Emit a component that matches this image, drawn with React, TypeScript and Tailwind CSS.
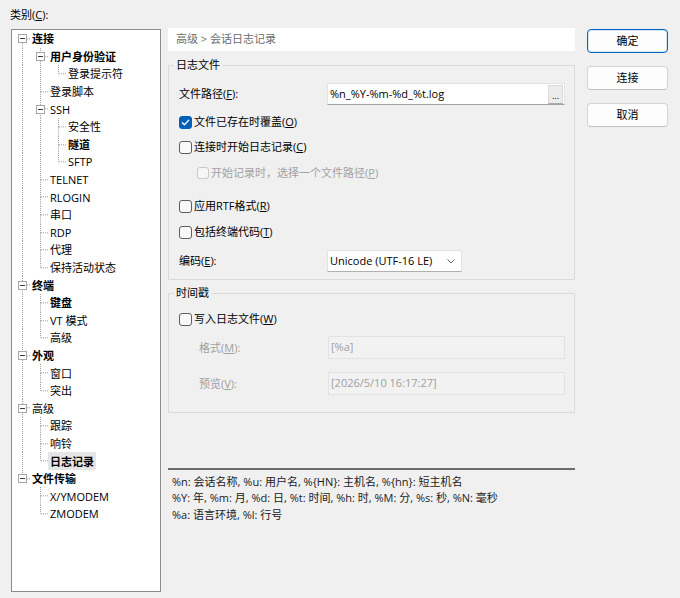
import React from "react";

interface TreeNode {
  label: string;
  level: number;
  bold?: boolean;
  expander?: boolean;
  selected?: boolean;
}

const TREE: TreeNode[] = [
  { label: "连接", level: 0, bold: true, expander: true },
  { label: "用户身份验证", level: 1, bold: true, expander: true },
  { label: "登录提示符", level: 2 },
  { label: "登录脚本", level: 1 },
  { label: "SSH", level: 1, expander: true },
  { label: "安全性", level: 2 },
  { label: "隧道", level: 2, bold: true },
  { label: "SFTP", level: 2 },
  { label: "TELNET", level: 1 },
  { label: "RLOGIN", level: 1 },
  { label: "串口", level: 1 },
  { label: "RDP", level: 1 },
  { label: "代理", level: 1 },
  { label: "保持活动状态", level: 1 },
  { label: "终端", level: 0, bold: true, expander: true },
  { label: "键盘", level: 1, bold: true },
  { label: "VT 模式", level: 1 },
  { label: "高级", level: 1 },
  { label: "外观", level: 0, bold: true, expander: true },
  { label: "窗口", level: 1 },
  { label: "突出", level: 1 },
  { label: "高级", level: 0, expander: true },
  { label: "跟踪", level: 1 },
  { label: "响铃", level: 1 },
  { label: "日志记录", level: 1, bold: true, selected: true },
  { label: "文件传输", level: 0, bold: true, expander: true },
  { label: "X/YMODEM", level: 1 },
  { label: "ZMODEM", level: 1 },
];

// work out which dotted guide lines each row needs
function buildRows(nodes: TreeNode[]) {
  const cont: boolean[] = [];
  return nodes.map((n, i) => {
    let hasNext = false;
    for (let j = i + 1; j < nodes.length; j++) {
      if (nodes[j].level < n.level) break;
      if (nodes[j].level === n.level) {
        hasNext = true;
        break;
      }
    }
    const guides = cont.slice(0, n.level);
    cont[n.level] = hasNext;
    cont.length = n.level + 1;
    return { ...n, hasNext, guides, first: i === 0 };
  });
}

const ROWS = buildRows(TREE);

function GuideCell({
  pass,
  top,
  bottom,
  elbow,
  expander,
}: {
  pass?: boolean;
  top?: boolean;
  bottom?: boolean;
  elbow?: boolean;
  expander?: boolean;
}) {
  return (
    <div className="relative h-full w-[18px] shrink-0">
      <svg className="absolute inset-0 h-full w-full" fill="none">
        <g stroke="#a0a0a0" strokeWidth="1" strokeDasharray="1 1">
          {pass && <line x1="9.5" y1="0" x2="9.5" y2="100%" />}
          {top && <line x1="9.5" y1="0" x2="9.5" y2="50%" />}
          {bottom && <line x1="9.5" y1="50%" x2="9.5" y2="100%" />}
          {elbow && <line x1="10" y1="50%" x2="18" y2="50%" />}
        </g>
      </svg>
      {expander && (
        <div className="absolute inset-0 flex items-center justify-center">
          <div className="ml-px flex h-[9px] w-[9px] items-center justify-center border border-[#a6a6a6] bg-white">
            <div className="h-px w-[5px] bg-[#3c3c3c]" />
          </div>
        </div>
      )}
    </div>
  );
}

function Check({
  checked,
  disabled,
  children,
}: {
  checked?: boolean;
  disabled?: boolean;
  children: React.ReactNode;
}) {
  return (
    <div className="flex h-[16px] items-center">
      <span
        className={
          checked
            ? "flex h-[13px] w-[13px] items-center justify-center rounded-[3px] border border-[#005fb8] bg-[#005fb8]"
            : disabled
              ? "h-[12px] w-[12px] rounded-[3px] border border-[#c9c9c9] bg-[#f6f6f6]"
              : "h-[13px] w-[13px] rounded-[3px] border border-[#5e5e5e] bg-[#f9f9f9]"
        }
      >
        {checked && (
          <svg width="11" height="11" viewBox="0 0 11 11" fill="none">
            <path d="M2.3 5.8 L4.4 7.8 L8.7 3.3" stroke="white" strokeWidth="1.3" strokeLinecap="round" strokeLinejoin="round" />
          </svg>
        )}
      </span>
      <span className={disabled ? "ml-[2px] text-[#a2a2a2]" : "ml-[2px]"}>{children}</span>
    </div>
  );
}

function Button({ children, primary }: { children: React.ReactNode; primary?: boolean }) {
  return (
    <div
      className={
        primary
          ? "flex h-[24px] items-center justify-center rounded-[4px] border border-[#0067c0] bg-[#fdfdfd] shadow-[inset_0_0_0_1px_#d6e6f5]"
          : "flex h-[24px] items-center justify-center rounded-[4px] border border-[#d4d4d4] border-b-[#c2c2c2] bg-[#fdfdfd]"
      }
    >
      {children}
    </div>
  );
}

export default function App() {
  return (
    <div className="flex h-[598px] w-[680px] bg-[#f0f0f0] text-[11px] text-black [font-family:'Open_Sans','Noto_Sans_CJK_SC',sans-serif]">
      {/* Category tree */}
      <div className="ml-[11px] flex w-[150px] flex-col">
        <div className="-ml-px mt-[7px] h-[16px] leading-[16px]">
          类别(<u>C</u>):
        </div>
        <div className="mt-[6px] h-[563px] border border-[#8c8c8c] bg-white pl-px">
          {ROWS.map((r, i) => (
            <div key={i} className="flex h-[17.6px] items-center">
              {r.guides.map((g, k) => (
                <GuideCell key={k} pass={g} />
              ))}
              <GuideCell
                top={!(r.level === 0 && r.first)}
                bottom={r.hasNext}
                elbow
                expander={r.expander}
              />
              <span
                className={
                  (r.bold ? "font-bold " : "") +
                  (r.selected
                    ? "-ml-px flex h-full items-center bg-[#e5e5e5] px-[2px] leading-none"
                    : "ml-px leading-none")
                }
              >
                {r.label}
              </span>
            </div>
          ))}
        </div>
      </div>

      {/* Settings panel */}
      <div className="ml-[7px] mt-[28px] flex w-[407px] flex-col">
        <div className="flex h-[23px] items-center bg-white pl-[8px] text-[#6d6d6d]">高级 &gt; 会话日志记录</div>

        <div className="relative mt-[14px] h-[215px] border border-[#dadada] pl-[10px] pt-[17px]">
          <span className="absolute -top-[9px] left-[5px] bg-[#f0f0f0] px-[2px] leading-[16px]">日志文件</span>
          <div className="flex h-[22px] items-center">
            <div className="w-[148px]">
              文件路径(<u>F</u>):
            </div>
            <div className="flex h-[22px] w-[238px] items-center border border-[#e3e3e3] border-b-[#a3a3a3] bg-white pl-[2px]">
              <span className="flex-1">%n_%Y-%m-%d_%t.log</span>
              <div className="mr-px flex h-[19px] w-[15px] items-end justify-center border border-[#d9d9d9] border-b-[#a8a8a8] bg-[#ececec] pb-[3px] text-[9px] leading-none">
                ...
              </div>
            </div>
          </div>
          <div className="mt-[9px]">
            <Check checked>
              文件已存在时覆盖(<u>O</u>)
            </Check>
          </div>
          <div className="mt-[9px]">
            <Check>
              连接时开始日志记录(<u>C</u>)
            </Check>
          </div>
          <div className="mt-[10px] pl-[18px]">
            <Check disabled>
              开始记录时，选择一个文件路径(<u>P</u>)
            </Check>
          </div>
          <div className="mt-[17px]">
            <Check>
              应用RTF格式(<u>R</u>)
            </Check>
          </div>
          <div className="mt-[10px]">
            <Check>
              包括终端代码(<u>T</u>)
            </Check>
          </div>
          <div className="mt-[10px] flex h-[22px] items-center">
            <div className="w-[148px]">
              编码(<u>E</u>):
            </div>
            <div className="flex h-[22px] w-[135px] items-center justify-between border border-[#e3e3e3] border-b-[#b0b0b0] bg-white pl-[2px] pr-[6px]">
              <span>Unicode (UTF-16 LE)</span>
              <svg width="8" height="5" viewBox="0 0 8 5" fill="none">
                <path d="M0.5 0.5 L4 4 L7.5 0.5" stroke="#606060" strokeWidth="1" />
              </svg>
            </div>
          </div>
        </div>

        <div className="relative mt-[13px] h-[120px] border border-[#dadada] pl-[10px] pt-[17px]">
          <span className="absolute -top-[9px] left-[5px] bg-[#f0f0f0] px-[2px] leading-[16px]">时间戳</span>
          <Check>
            写入日志文件(<u>W</u>)
          </Check>
          <div className="mt-[9px] flex h-[23px] items-start pl-[20px] text-[#a0a0a0]">
            <div className="mt-[4px] w-[129px]">
              格式(<u>M</u>):
            </div>
            <div className="h-[23px] w-[237px] border border-[#e2e2e2] bg-[#f2f2f2] pl-[2px] pt-[2px]">[%a]</div>
          </div>
          <div className="mt-[13px] flex h-[23px] items-start pl-[20px] text-[#a0a0a0]">
            <div className="mt-[4px] w-[129px]">
              预览(<u>V</u>):
            </div>
            <div className="h-[23px] w-[237px] border border-[#e2e2e2] bg-[#f2f2f2] pl-[2px] pt-[2px]">
              [2026/5/10 16:17:27]
            </div>
          </div>
        </div>

        <div className="mt-[55px] h-[2px] bg-[#6c6c6c]" />
        <div className="mt-[4px] pl-[4px] leading-[16.3px] text-[#1a1a1a]">
          <div>%n: 会话名称, %u: 用户名, %{"{"}HN{"}"}: 主机名, %{"{"}hn{"}"}: 短主机名</div>
          <div>%Y: 年, %m: 月, %d: 日, %t: 时间, %h: 时, %M: 分, %s: 秒, %N: 毫秒</div>
          <div>%a: 语言环境, %l: 行号</div>
        </div>
      </div>

      {/* Dialog buttons */}
      <div className="ml-[12px] mt-[29px] flex w-[81px] flex-col gap-[13px]">
        <Button primary>确定</Button>
        <Button>连接</Button>
        <Button>取消</Button>
      </div>
    </div>
  );
}
